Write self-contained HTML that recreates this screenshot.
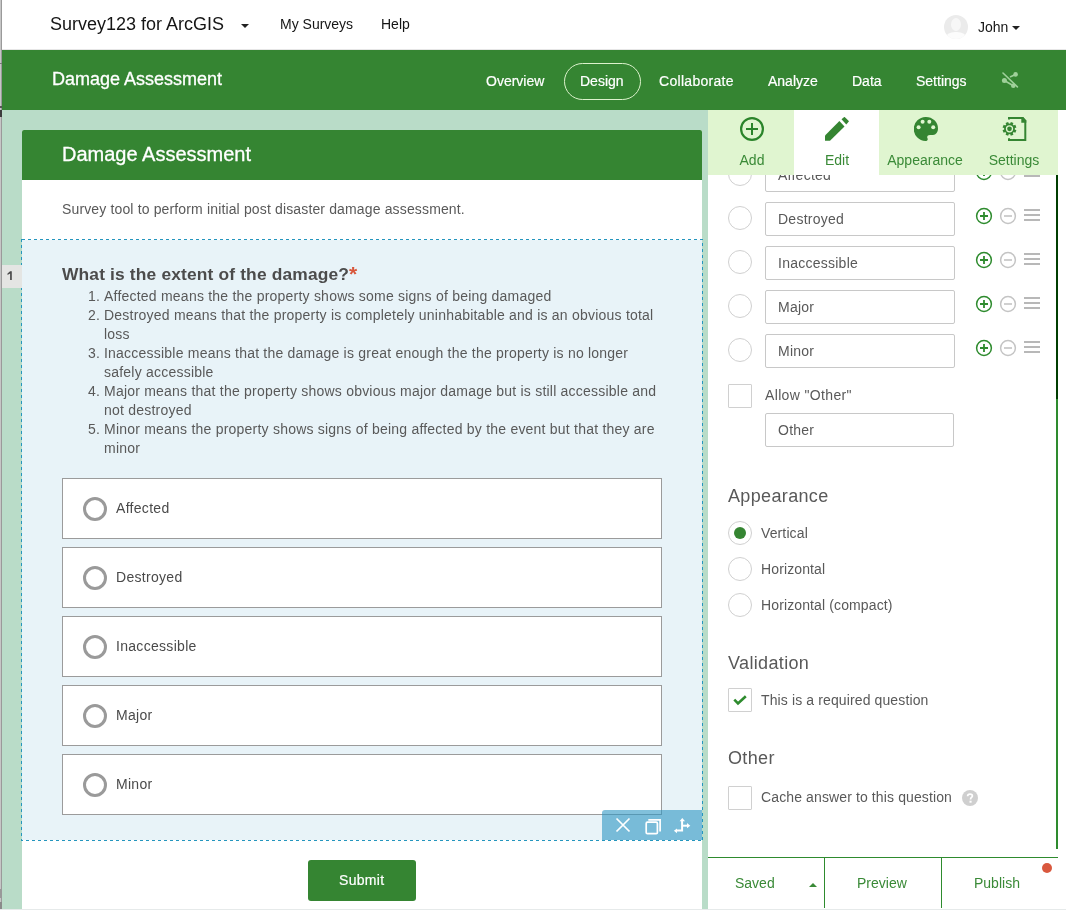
<!DOCTYPE html>
<html><head><meta charset="utf-8">
<style>
*{box-sizing:border-box;margin:0;padding:0}
html,body{width:1066px;height:910px;overflow:hidden;background:#fff}
body{position:relative;font-family:"Liberation Sans",sans-serif;color:#4a4a4a}
.a{position:absolute}
.t{position:absolute;white-space:nowrap;will-change:transform}
</style></head><body>

<!-- left window strip -->
<div class="a" style="left:0;top:0;width:2px;height:910px;background:#c6c6c6"></div>
<div class="a" style="left:1px;top:0;width:1px;height:910px;background:#9a9a9a"></div>
<div class="a" style="left:0;top:63px;width:2px;height:1px;background:#777"></div>
<div class="a" style="left:0;top:106px;width:2px;height:2px;background:#555"></div>
<div class="a" style="left:0;top:110px;width:2px;height:7px;background:#3c3c3c"></div>
<div class="a" style="left:0;top:889px;width:2px;height:9px;background:#999"></div>
<div class="a" style="left:0;top:902px;width:2px;height:7px;background:#8a8a8a"></div>

<!-- top header -->
<div class="a" style="left:2px;top:0;width:1064px;height:50px;background:#fff;border-bottom:1px solid #e6e6e6"></div>
<div class="t" style="left:50px;top:12px;font-size:18px;line-height:24px;color:#151515">Survey123 for ArcGIS</div>
<div class="a" style="left:241px;top:24px;width:0;height:0;border-left:4px solid transparent;border-right:4px solid transparent;border-top:4px solid #222"></div>
<div class="t" style="left:280px;top:14px;font-size:14px;line-height:20px;color:#151515">My Surveys</div>
<div class="t" style="left:381px;top:14px;font-size:14px;line-height:20px;color:#151515">Help</div>
<!-- avatar -->
<div class="a" style="left:944px;top:15px;width:24px;height:24px;border-radius:50%;background:#ebebeb;overflow:hidden">
  <div class="a" style="left:7px;top:3px;width:10px;height:13px;border-radius:50%;background:#f7f7f7"></div>
  <div class="a" style="left:2px;top:17px;width:20px;height:12px;border-radius:45% 45% 0 0;background:#fcfcfc"></div>
</div>
<div class="t" style="left:978px;top:17px;font-size:14px;line-height:20px;color:#151515">John</div>
<div class="a" style="left:1012px;top:26px;width:0;height:0;border-left:4px solid transparent;border-right:4px solid transparent;border-top:4px solid #222"></div>

<!-- green bar -->
<div class="a" style="left:2px;top:50px;width:1064px;height:60px;background:#358532"></div>
<div class="t" style="left:52px;top:67px;font-size:18px;line-height:24px;color:#fff;-webkit-text-stroke:0.3px #fff">Damage Assessment</div>
<div class="t" style="left:486px;top:71px;font-size:14px;line-height:20px;color:#fff;-webkit-text-stroke:0.2px #fff">Overview</div>
<div class="a" style="left:564px;top:63px;width:77px;height:37px;border:1px solid #dcf2cc;border-radius:18.5px"></div>
<div class="t" style="left:580px;top:71px;font-size:14px;line-height:20px;color:#fff;-webkit-text-stroke:0.2px #fff">Design</div>
<div class="t" style="left:659px;top:71px;font-size:14px;line-height:20px;color:#fff;-webkit-text-stroke:0.2px #fff;letter-spacing:0.3px">Collaborate</div>
<div class="t" style="left:768px;top:71px;font-size:14px;line-height:20px;color:#fff;-webkit-text-stroke:0.2px #fff">Analyze</div>
<div class="t" style="left:852px;top:71px;font-size:14px;line-height:20px;color:#fff;-webkit-text-stroke:0.2px #fff">Data</div>
<div class="t" style="left:916px;top:71px;font-size:14px;line-height:20px;color:#fff;-webkit-text-stroke:0.2px #fff">Settings</div>
<svg class="a" style="left:995px;top:65px" width="30" height="30" viewBox="0 0 30 30">
  <g stroke="#9fd09a" stroke-width="1.6" fill="#9fd09a" stroke-linecap="round">
    <line x1="8" y1="8" x2="22.4" y2="21.9"/>
    <line x1="9.4" y1="15.5" x2="18.3" y2="20.8"/>
    <line x1="15.5" y1="11.7" x2="20.6" y2="9.4"/>
    <circle cx="20.6" cy="9.4" r="2.3" stroke="none"/>
    <circle cx="9.4" cy="15.5" r="2.5" stroke="none"/>
    <circle cx="18.3" cy="20.8" r="2.3" stroke="none"/>
  </g>
</svg>

<!-- left design area -->
<div class="a" style="left:2px;top:110px;width:706px;height:800px;background:#b9dcc8"></div>

<!-- card -->
<div class="a" style="left:22px;top:130px;width:680px;height:780px;background:#fff;border-radius:2px 2px 0 0"></div>
<div class="a" style="left:22px;top:130px;width:680px;height:50px;background:#358532;border-radius:2px 2px 0 0"></div>
<div class="t" style="left:62px;top:142px;font-size:20px;line-height:24px;color:#fff;-webkit-text-stroke:0.3px #fff">Damage Assessment</div>
<div class="t" style="left:62px;top:199px;font-size:14px;line-height:20px;color:#595959;letter-spacing:0.145px">Survey tool to perform initial post disaster damage assessment.</div>

<!-- question block -->
<div class="a" style="left:22px;top:240px;width:680px;height:600px;background:#e8f3f8"></div>
<svg class="a" style="left:21px;top:239px" width="682" height="602"><rect x="0.5" y="0.5" width="681" height="601" fill="none" stroke="#2596be" stroke-width="1" stroke-dasharray="3 3" shape-rendering="crispEdges"/></svg>
<div class="a" style="left:2px;top:265px;width:20px;height:23px;background:#e4e5e3"></div>
<svg class="a" style="left:2px;top:265px" width="20" height="23" viewBox="0 0 20 23"><path d="M8.1 6.3H9.8V15H8.1V8.6L5.5 10.1V8.4Z" fill="#4a4a4a"/></svg>

<div class="t" style="left:62px;top:263px;font-size:17.4px;line-height:22px;font-weight:700;color:#4c4c4c;letter-spacing:0.15px">What is the extent of the damage?<span style="color:#d8573c;font-size:21px;line-height:0;position:relative;top:1px;letter-spacing:0">*</span></div>

<div class="a" style="left:62px;top:287px;width:600px;font-size:14px;line-height:19px;color:#595959;letter-spacing:0.22px">
  <div class="t" style="left:26px;top:0">1.</div><div class="t" style="left:42px;top:0">Affected means the the property shows some signs of being damaged</div>
  <div class="t" style="left:26px;top:19px">2.</div><div class="t" style="left:42px;top:19px">Destroyed means that the property is completely uninhabitable and is an obvious total</div>
  <div class="t" style="left:42px;top:38px">loss</div>
  <div class="t" style="left:26px;top:57px">3.</div><div class="t" style="left:42px;top:57px">Inaccessible means that the damage is great enough the the property is no longer</div>
  <div class="t" style="left:42px;top:76px">safely accessible</div>
  <div class="t" style="left:26px;top:95px">4.</div><div class="t" style="left:42px;top:95px">Major means that the property shows obvious major damage but is still accessible and</div>
  <div class="t" style="left:42px;top:114px">not destroyed</div>
  <div class="t" style="left:26px;top:133px">5.</div><div class="t" style="left:42px;top:133px">Minor means the property shows signs of being affected by the event but that they are</div>
  <div class="t" style="left:42px;top:152px">minor</div>
</div>

<!-- options -->
<div class="a" style="left:62px;top:478px;width:600px;height:61px;background:#fff;border:1px solid #9b9b9b"></div>
<div class="a" style="left:83px;top:497px;width:24px;height:24px;border:3px solid #9a9a9a;border-radius:50%"></div>
<div class="t" style="left:116px;top:498px;font-size:14px;line-height:20px;color:#4a4a4a;letter-spacing:0.3px">Affected</div>
<div class="a" style="left:62px;top:547px;width:600px;height:61px;background:#fff;border:1px solid #9b9b9b"></div>
<div class="a" style="left:83px;top:566px;width:24px;height:24px;border:3px solid #9a9a9a;border-radius:50%"></div>
<div class="t" style="left:116px;top:567px;font-size:14px;line-height:20px;color:#4a4a4a;letter-spacing:0.3px">Destroyed</div>
<div class="a" style="left:62px;top:616px;width:600px;height:61px;background:#fff;border:1px solid #9b9b9b"></div>
<div class="a" style="left:83px;top:635px;width:24px;height:24px;border:3px solid #9a9a9a;border-radius:50%"></div>
<div class="t" style="left:116px;top:636px;font-size:14px;line-height:20px;color:#4a4a4a;letter-spacing:0.3px">Inaccessible</div>
<div class="a" style="left:62px;top:685px;width:600px;height:61px;background:#fff;border:1px solid #9b9b9b"></div>
<div class="a" style="left:83px;top:704px;width:24px;height:24px;border:3px solid #9a9a9a;border-radius:50%"></div>
<div class="t" style="left:116px;top:705px;font-size:14px;line-height:20px;color:#4a4a4a;letter-spacing:0.3px">Major</div>
<div class="a" style="left:62px;top:754px;width:600px;height:61px;background:#fff;border:1px solid #9b9b9b"></div>
<div class="a" style="left:83px;top:773px;width:24px;height:24px;border:3px solid #9a9a9a;border-radius:50%"></div>
<div class="t" style="left:116px;top:774px;font-size:14px;line-height:20px;color:#4a4a4a;letter-spacing:0.3px">Minor</div>


<!-- toolbar -->
<div class="a" style="left:602px;top:810px;width:100px;height:30px;background:rgba(45,150,195,0.6);border-radius:3px 0 0 0"></div>
<svg class="a" style="left:602px;top:810px" width="100" height="30" viewBox="0 0 100 30">
  <path d="M14.5 8.5L27.5 21.5M27.5 8.5L14.5 21.5" stroke="#fff" stroke-width="1.7"/>
  <rect x="44.2" y="12.2" width="11.2" height="11.4" rx="1.2" fill="none" stroke="#fff" stroke-width="1.7"/>
  <path d="M46.3 9.9H58.1V21.5" fill="none" stroke="#fff" stroke-width="1.7"/>
  <path d="M80.1 10.8V20.6H74.6" fill="none" stroke="#fff" stroke-width="2"/>
  <path d="M77.6 11.2L80.3 7.9L83 11.2Z" fill="#fff"/>
  <path d="M80.5 15.7H85.5" fill="none" stroke="#fff" stroke-width="2"/>
  <path d="M85 13.1L88.3 15.7L85 18.3Z" fill="#fff"/>
  <path d="M75 18.5L71.9 20.8L75 23.3Z" fill="#fff"/>
</svg>

<!-- submit -->
<div class="a" style="left:308px;top:860px;width:108px;height:41px;background:#358532;border-radius:3px"></div>
<div class="t" style="left:339px;top:870px;font-size:14px;line-height:20px;color:#fff;letter-spacing:0.3px;-webkit-text-stroke:0.2px #fff">Submit</div>


<!-- right panel -->
<div class="a" style="left:708px;top:110px;width:358px;height:800px;background:#fff"></div>
<div class="a" style="left:728px;top:162px;width:24px;height:24px;border:1px solid #d0d0d0;border-radius:50%"></div>
<div class="a" style="left:765px;top:158px;width:190px;height:34px;border:1px solid #c8c8c8;border-radius:2px"></div>
<div class="t" style="left:778px;top:165px;font-size:14px;line-height:20px;color:#595959;letter-spacing:0.25px">Affected</div>
<svg class="a" style="left:975px;top:163px" width="70" height="18" viewBox="0 0 70 18">
<circle cx="9" cy="9" r="7.4" fill="none" stroke="#2e8b2e" stroke-width="1.5"/><path d="M5 9H13M9 5V13" stroke="#2e8b2e" stroke-width="1.8"/>
<circle cx="33" cy="9" r="7.4" fill="none" stroke="#c4c4c4" stroke-width="1.5"/><path d="M29 9H37" stroke="#c4c4c4" stroke-width="1.6"/>
<path d="M49 3H65M49 8H65M49 13H65" stroke="#b8b8b8" stroke-width="2"/>
</svg>
<div class="a" style="left:728px;top:206px;width:24px;height:24px;border:1px solid #d0d0d0;border-radius:50%"></div>
<div class="a" style="left:765px;top:202px;width:190px;height:34px;border:1px solid #c8c8c8;border-radius:2px"></div>
<div class="t" style="left:778px;top:209px;font-size:14px;line-height:20px;color:#595959;letter-spacing:0.25px">Destroyed</div>
<svg class="a" style="left:975px;top:207px" width="70" height="18" viewBox="0 0 70 18">
<circle cx="9" cy="9" r="7.4" fill="none" stroke="#2e8b2e" stroke-width="1.5"/><path d="M5 9H13M9 5V13" stroke="#2e8b2e" stroke-width="1.8"/>
<circle cx="33" cy="9" r="7.4" fill="none" stroke="#c4c4c4" stroke-width="1.5"/><path d="M29 9H37" stroke="#c4c4c4" stroke-width="1.6"/>
<path d="M49 3H65M49 8H65M49 13H65" stroke="#b8b8b8" stroke-width="2"/>
</svg>
<div class="a" style="left:728px;top:250px;width:24px;height:24px;border:1px solid #d0d0d0;border-radius:50%"></div>
<div class="a" style="left:765px;top:246px;width:190px;height:34px;border:1px solid #c8c8c8;border-radius:2px"></div>
<div class="t" style="left:778px;top:253px;font-size:14px;line-height:20px;color:#595959;letter-spacing:0.25px">Inaccessible</div>
<svg class="a" style="left:975px;top:251px" width="70" height="18" viewBox="0 0 70 18">
<circle cx="9" cy="9" r="7.4" fill="none" stroke="#2e8b2e" stroke-width="1.5"/><path d="M5 9H13M9 5V13" stroke="#2e8b2e" stroke-width="1.8"/>
<circle cx="33" cy="9" r="7.4" fill="none" stroke="#c4c4c4" stroke-width="1.5"/><path d="M29 9H37" stroke="#c4c4c4" stroke-width="1.6"/>
<path d="M49 3H65M49 8H65M49 13H65" stroke="#b8b8b8" stroke-width="2"/>
</svg>
<div class="a" style="left:728px;top:294px;width:24px;height:24px;border:1px solid #d0d0d0;border-radius:50%"></div>
<div class="a" style="left:765px;top:290px;width:190px;height:34px;border:1px solid #c8c8c8;border-radius:2px"></div>
<div class="t" style="left:778px;top:297px;font-size:14px;line-height:20px;color:#595959;letter-spacing:0.25px">Major</div>
<svg class="a" style="left:975px;top:295px" width="70" height="18" viewBox="0 0 70 18">
<circle cx="9" cy="9" r="7.4" fill="none" stroke="#2e8b2e" stroke-width="1.5"/><path d="M5 9H13M9 5V13" stroke="#2e8b2e" stroke-width="1.8"/>
<circle cx="33" cy="9" r="7.4" fill="none" stroke="#c4c4c4" stroke-width="1.5"/><path d="M29 9H37" stroke="#c4c4c4" stroke-width="1.6"/>
<path d="M49 3H65M49 8H65M49 13H65" stroke="#b8b8b8" stroke-width="2"/>
</svg>
<div class="a" style="left:728px;top:338px;width:24px;height:24px;border:1px solid #d0d0d0;border-radius:50%"></div>
<div class="a" style="left:765px;top:334px;width:190px;height:34px;border:1px solid #c8c8c8;border-radius:2px"></div>
<div class="t" style="left:778px;top:341px;font-size:14px;line-height:20px;color:#595959;letter-spacing:0.25px">Minor</div>
<svg class="a" style="left:975px;top:339px" width="70" height="18" viewBox="0 0 70 18">
<circle cx="9" cy="9" r="7.4" fill="none" stroke="#2e8b2e" stroke-width="1.5"/><path d="M5 9H13M9 5V13" stroke="#2e8b2e" stroke-width="1.8"/>
<circle cx="33" cy="9" r="7.4" fill="none" stroke="#c4c4c4" stroke-width="1.5"/><path d="M29 9H37" stroke="#c4c4c4" stroke-width="1.6"/>
<path d="M49 3H65M49 8H65M49 13H65" stroke="#b8b8b8" stroke-width="2"/>
</svg>
<div class="a" style="left:728px;top:384px;width:24px;height:24px;border:1px solid #d0d0d0;border-radius:1px"></div>
<div class="t" style="left:765px;top:385px;font-size:14px;line-height:20px;color:#595959;letter-spacing:0.35px">Allow "Other"</div>
<div class="a" style="left:765px;top:413px;width:189px;height:34px;border:1px solid #c8c8c8;border-radius:2px"></div>
<div class="t" style="left:778px;top:420px;font-size:14px;line-height:20px;color:#595959;letter-spacing:0.25px">Other</div>
<div class="t" style="left:728px;top:484px;font-size:18px;line-height:24px;color:#595959;letter-spacing:0.35px">Appearance</div>
<div class="a" style="left:728px;top:521px;width:24px;height:24px;border:1px solid #d0d0d0;border-radius:50%"></div>
<div class="a" style="left:734px;top:527px;width:12px;height:12px;background:#358532;border-radius:50%"></div>
<div class="t" style="left:761px;top:523px;font-size:14px;line-height:20px;color:#595959;letter-spacing:0.12px">Vertical</div>
<div class="a" style="left:728px;top:557px;width:24px;height:24px;border:1px solid #d0d0d0;border-radius:50%"></div>
<div class="t" style="left:761px;top:559px;font-size:14px;line-height:20px;color:#595959;letter-spacing:0.12px">Horizontal</div>
<div class="a" style="left:728px;top:593px;width:24px;height:24px;border:1px solid #d0d0d0;border-radius:50%"></div>
<div class="t" style="left:761px;top:595px;font-size:14px;line-height:20px;color:#595959;letter-spacing:0.12px">Horizontal (compact)</div>
<div class="t" style="left:728px;top:651px;font-size:18px;line-height:24px;color:#595959;letter-spacing:0.35px">Validation</div>
<div class="a" style="left:728px;top:688px;width:24px;height:24px;border:1px solid #d0d0d0;border-radius:1px"></div>
<svg class="a" style="left:728px;top:688px" width="24" height="24" viewBox="0 0 24 24"><path d="M6.3 11.6L10 15.4L17.8 8.2" fill="none" stroke="#2e8b2e" stroke-width="2.6"/></svg>
<div class="t" style="left:761px;top:690px;font-size:14px;line-height:20px;color:#595959;letter-spacing:0.12px">This is a required question</div>
<div class="t" style="left:728px;top:746px;font-size:18px;line-height:24px;color:#595959;letter-spacing:0.35px">Other</div>
<div class="a" style="left:728px;top:786px;width:24px;height:24px;border:1px solid #d0d0d0;border-radius:1px"></div>
<div class="t" style="left:761px;top:787px;font-size:14px;line-height:20px;color:#595959;letter-spacing:0.12px">Cache answer to this question</div>
<svg class="a" style="left:962px;top:790px" width="16" height="16" viewBox="0 0 16 16"><circle cx="8" cy="8" r="8" fill="#cfcfcf"/><path d="M5.6 6.2C5.6 4.8 6.7 4.1 8 4.1C9.4 4.1 10.4 4.9 10.4 6C10.4 7.3 8.6 7.6 8.6 9V9.5" fill="none" stroke="#fff" stroke-width="1.7"/><rect x="7.5" y="10.7" width="2.1" height="2" fill="#fff"/></svg>
<div class="a" style="left:1056px;top:175px;width:2px;height:224px;background:#003d00"></div>
<div class="a" style="left:1056px;top:399px;width:2px;height:450px;background:#2e8b2e"></div>
<div class="a" style="left:708px;top:110px;width:86px;height:65px;background:#e0f5d0"></div>
<div class="a" style="left:794px;top:110px;width:85px;height:65px;background:#fff"></div>
<div class="a" style="left:879px;top:110px;width:179px;height:65px;background:#e0f5d0"></div>
<div class="t" style="left:691.5px;width:120px;top:150px;text-align:center;font-size:14px;line-height:20px;color:#3a8a37">Add</div>
<div class="t" style="left:777px;width:120px;top:150px;text-align:center;font-size:14px;line-height:20px;color:#3a8a37">Edit</div>
<div class="t" style="left:865px;width:120px;top:150px;text-align:center;font-size:14px;line-height:20px;color:#3a8a37">Appearance</div>
<div class="t" style="left:954px;width:120px;top:150px;text-align:center;font-size:14px;line-height:20px;color:#3a8a37">Settings</div>
<svg class="a" style="left:740px;top:117px" width="24" height="24" viewBox="0 0 24 24"><circle cx="12" cy="12" r="10.9" fill="none" stroke="#2a842a" stroke-width="2.2"/><path d="M6 12H18M12 6V18" stroke="#2a842a" stroke-width="2"/></svg>
<svg class="a" style="left:825px;top:117px" width="24" height="24" viewBox="0 0 24 24"><path d="M0 18.5L14.4 4L19.5 9.4L5 23.8H0Z" fill="#358532"/><path d="M16.5 2.3L19.5 -0.2L24 4.3L21.3 7.6Z" fill="#358532"/></svg>
<svg class="a" style="left:914px;top:117px" width="24" height="24" viewBox="0 0 24 24"><path d="M12 0A12 12 0 0 0 11.5 24C13.3 24 14.2 22.6 13.5 21.2C12.6 19.6 13.8 18 16 18H19C22 18 24 15 24 11.5A12 11.5 0 0 0 12 0Z" fill="#358532"/><circle cx="8.6" cy="4.7" r="2" fill="#e0f5d0"/><circle cx="15.3" cy="4.7" r="2" fill="#e0f5d0"/><circle cx="4.6" cy="10.2" r="2" fill="#e0f5d0"/><circle cx="19.2" cy="10.2" r="2" fill="#e0f5d0"/></svg>
<svg class="a" style="left:1002px;top:117px" width="26" height="26" viewBox="0 0 26 26">
<path d="M7 2.6V1H20.8L23.3 3.8V22.9H7V21.3" fill="none" stroke="#358532" stroke-width="2"/>
<path d="M19.3 0H21L24.3 3.6V5.8H19.3Z" fill="#358532"/>
<circle cx="7.5" cy="11.8" r="5.4" fill="#358532"/><rect x="6.1" y="4.9" width="2.8" height="3" transform="rotate(22.5 7.5 11.8)" fill="#358532"/><rect x="6.1" y="4.9" width="2.8" height="3" transform="rotate(67.5 7.5 11.8)" fill="#358532"/><rect x="6.1" y="4.9" width="2.8" height="3" transform="rotate(112.5 7.5 11.8)" fill="#358532"/><rect x="6.1" y="4.9" width="2.8" height="3" transform="rotate(157.5 7.5 11.8)" fill="#358532"/><rect x="6.1" y="4.9" width="2.8" height="3" transform="rotate(202.5 7.5 11.8)" fill="#358532"/><rect x="6.1" y="4.9" width="2.8" height="3" transform="rotate(247.5 7.5 11.8)" fill="#358532"/><rect x="6.1" y="4.9" width="2.8" height="3" transform="rotate(292.5 7.5 11.8)" fill="#358532"/><rect x="6.1" y="4.9" width="2.8" height="3" transform="rotate(337.5 7.5 11.8)" fill="#358532"/>
<circle cx="7.5" cy="11.8" r="3" fill="none" stroke="#e0f5d0" stroke-width="1.3"/>
</svg>
<div class="a" style="left:708px;top:849px;width:358px;height:59px;background:#fff"></div>
<div class="a" style="left:708px;top:857px;width:350px;height:1px;background:#2e8b2e"></div>
<div class="a" style="left:824px;top:858px;width:1px;height:50px;background:#2e8b2e"></div>
<div class="a" style="left:941px;top:858px;width:1px;height:50px;background:#2e8b2e"></div>
<div class="t" style="left:735px;top:873px;font-size:14px;line-height:20px;color:#3a8a37">Saved</div>
<div class="a" style="left:809px;top:883px;width:0;height:0;border-left:4px solid transparent;border-right:4px solid transparent;border-bottom:4px solid #3a8a37"></div>
<div class="t" style="left:857px;top:873px;font-size:14px;line-height:20px;color:#3a8a37">Preview</div>
<div class="t" style="left:974px;top:873px;font-size:14px;line-height:20px;color:#3a8a37">Publish</div>
<div class="a" style="left:1042px;top:863px;width:10px;height:10px;border-radius:50%;background:#d9583e"></div>


<!-- bottom grey strip -->
<div class="a" style="left:0;top:909px;width:1066px;height:1px;background:#e6eaea"></div>
</body></html>
